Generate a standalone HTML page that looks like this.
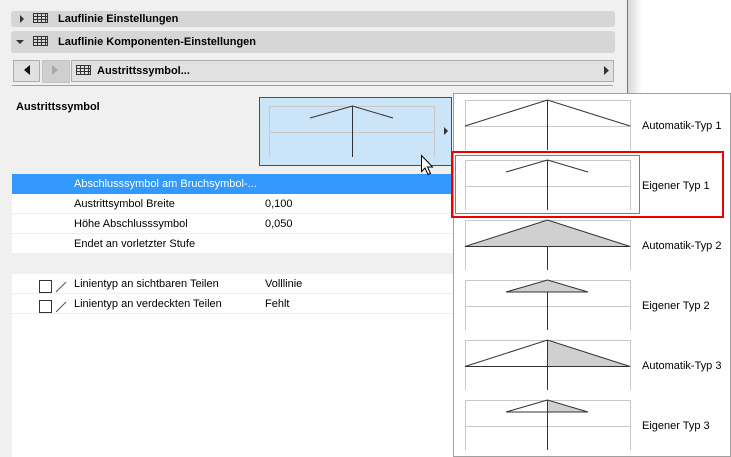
<!DOCTYPE html>
<html><head><style>
body{margin:0;width:731px;height:457px;overflow:hidden;background:#fff;position:relative;font-family:"Liberation Sans",sans-serif;font-size:11px;color:#000}
.a{position:absolute}
.t{position:absolute;white-space:nowrap;line-height:14px}
</style></head><body>
<div class="a" style="left:0;top:0;width:627px;height:457px;background:#f0f0f0"></div>
<div class="a" style="left:627px;top:0;width:1px;height:93px;background:#6a7a8a"></div>
<div class="a" style="left:628px;top:0;width:14px;height:93px;background:linear-gradient(90deg,#d8d8d8,#fff)"></div>
<div class="a" style="left:11px;top:11px;width:604px;height:16px;background:#d6d6d6;border-radius:3px"></div>
<div class="a" style="left:11px;top:31px;width:604px;height:22px;background:#d6d6d6;border-radius:3px"></div>
<div class="a" style="left:13px;top:60px;width:25px;height:20px;background:#e1e1e1;border:1px solid #adadad"></div>
<div class="a" style="left:42px;top:60px;width:26px;height:21px;background:#cfcfcf;border:1px solid #c4c4c4"></div>
<div class="a" style="left:71px;top:60px;width:541px;height:20px;background:#e1e1e1;border:1px solid #adadad"></div>
<div class="a" style="left:12px;top:85px;width:601px;height:1px;background:#a0a0a0"></div>
<div class="t" style="left:58px;top:12px;font-weight:bold">Lauflinie Einstellungen</div>
<div class="t" style="left:58px;top:35px;font-weight:bold">Lauflinie Komponenten-Einstellungen</div>
<div class="t" style="left:97px;top:64px;font-weight:bold">Austrittssymbol...</div>
<div class="t" style="left:16px;top:100px;font-weight:bold">Austrittssymbol</div>
<div class="a" style="left:12px;top:174px;width:441px;height:283px;background:#fff"></div>
<div class="a" style="left:12px;top:174px;width:441px;height:20px;background:#3399ff"></div>
<div class="a" style="left:12px;top:253px;width:441px;height:21px;background:#f0f0f0"></div>
<div class="a" style="left:12px;top:213px;width:441px;height:1px;background:#eee"></div>
<div class="a" style="left:12px;top:233px;width:441px;height:1px;background:#eee"></div>
<div class="a" style="left:12px;top:293px;width:441px;height:1px;background:#eee"></div>
<div class="a" style="left:12px;top:313px;width:441px;height:1px;background:#eee"></div>
<div class="t" style="left:74px;top:177px;color:#fff">Abschlusssymbol am Bruchsymbol-...</div>
<div class="t" style="left:74px;top:197px">Austrittsymbol Breite</div><div class="t" style="left:265px;top:197px">0,100</div>
<div class="t" style="left:74px;top:217px">Höhe Abschlusssymbol</div><div class="t" style="left:265px;top:217px">0,050</div>
<div class="t" style="left:74px;top:237px">Endet an vorletzter Stufe</div>
<div class="t" style="left:74px;top:277px">Linientyp an sichtbaren Teilen</div><div class="t" style="left:265px;top:277px">Volllinie</div>
<div class="t" style="left:74px;top:297px">Linientyp an verdeckten Teilen</div><div class="t" style="left:265px;top:297px">Fehlt</div>
<div class="a" style="left:259px;top:97px;width:191px;height:67px;background:#cce4f7;border:1px solid #1a5a96"></div>
<div class="a" style="left:453px;top:93px;width:276px;height:362px;background:#fff;border:1px solid #a0a0a0"></div>
<div class="t" style="left:642px;top:119px">Automatik-Typ 1</div>
<div class="t" style="left:642px;top:179px">Eigener Typ 1</div>
<div class="t" style="left:642px;top:239px">Automatik-Typ 2</div>
<div class="t" style="left:642px;top:299px">Eigener Typ 2</div>
<div class="t" style="left:642px;top:359px">Automatik-Typ 3</div>
<div class="t" style="left:642px;top:419px">Eigener Typ 3</div>
<svg class="a" style="left:0;top:0" width="731" height="457" viewBox="0 0 731 457">
<g fill="none" stroke="#333" stroke-width="1">
<g transform="translate(33,13)"><rect x="0.5" y="0.5" width="14" height="9"/><path d="M0 3.5H14M0 6.5H14M4.5 0V10M8.5 0V10M12.5 0V10"/></g>
<g transform="translate(33,36)"><rect x="0.5" y="0.5" width="14" height="9"/><path d="M0 3.5H14M0 6.5H14M4.5 0V10M8.5 0V10M12.5 0V10"/></g>
<g transform="translate(76,65)"><rect x="0.5" y="0.5" width="14" height="9"/><path d="M0 3.5H14M0 6.5H14M4.5 0V10M8.5 0V10M12.5 0V10"/></g>
<rect x="39.5" y="280.5" width="12" height="12"/><rect x="39.5" y="300.5" width="12" height="12"/>
<path d="M56 292L66 282M56 312L66 302" stroke="#555"/>
</g>
<g fill="#333"><path d="M20 15L24 19L20 23Z"/><path d="M16 40H24L20 44Z"/><path d="M30 65V75L24 70Z" fill="#111"/><path d="M52 65V75L58 70Z" fill="#aaa"/><path d="M604 66V75L609 70.5Z"/><path d="M444 127V135L448 131Z"/></g>
<g fill="none" stroke-width="1">
<path d="M269.5 157V106.5H434.5V157M269 132.5H435" stroke="#c8c8c8"/>
<path d="M352.5 106V157M310 118L352.5 106L393 118" stroke="#333"/>
</g>
<g fill="none" stroke="#c8c8c8">
<path d="M465.5 150V100.5H630.5V150M465 126.5H631"/>
<path d="M465.5 210V160.5H630.5V210M465 186.5H631"/>
<path d="M465.5 270V220.5H630.5V270M465 246.5H631"/>
<path d="M465.5 330V280.5H630.5V330M465 306.5H631"/>
<path d="M465.5 390V340.5H630.5V390M465 366.5H631"/>
<path d="M465.5 450V400.5H630.5V450M465 426.5H631"/>
</g>
<path d="M465 247L547.5 220L630 247Z" fill="#d0d0d0"/>
<path d="M506 292L547.5 280L588 292Z" fill="#d0d0d0"/>
<path d="M547.5 340L630 366H547.5Z" fill="#d0d0d0"/>
<path d="M547.5 400L588 412H547.5Z" fill="#d0d0d0"/>
<g fill="none" stroke="#333">
<path d="M547.5 100V150M465 126L547.5 100L630 126"/>
<path d="M547.5 160V210M506 172L547.5 160L588 172"/>
<path d="M547.5 247V270M465 246.5L547.5 220L630 246.5H465"/>
<path d="M547.5 292V330M506 292L547.5 280L588 292H506"/>
<path d="M547.5 340V390M465 366.5L547.5 340L630 366.5H465"/>
<path d="M547.5 400V450M506 412L547.5 400L588 412H506"/>
</g>
<rect x="455.5" y="155.5" width="184" height="58" fill="none" stroke="#3c8ee0"/>
<rect x="452" y="152" width="271" height="65" fill="none" stroke="#e00" stroke-width="2"/>
<path d="M421.5 155.5V171.5L425 168L428 174.5L430.5 173.5L427.5 167H432.5Z" fill="#fff" stroke="#000"/>
</svg>
</body></html>
